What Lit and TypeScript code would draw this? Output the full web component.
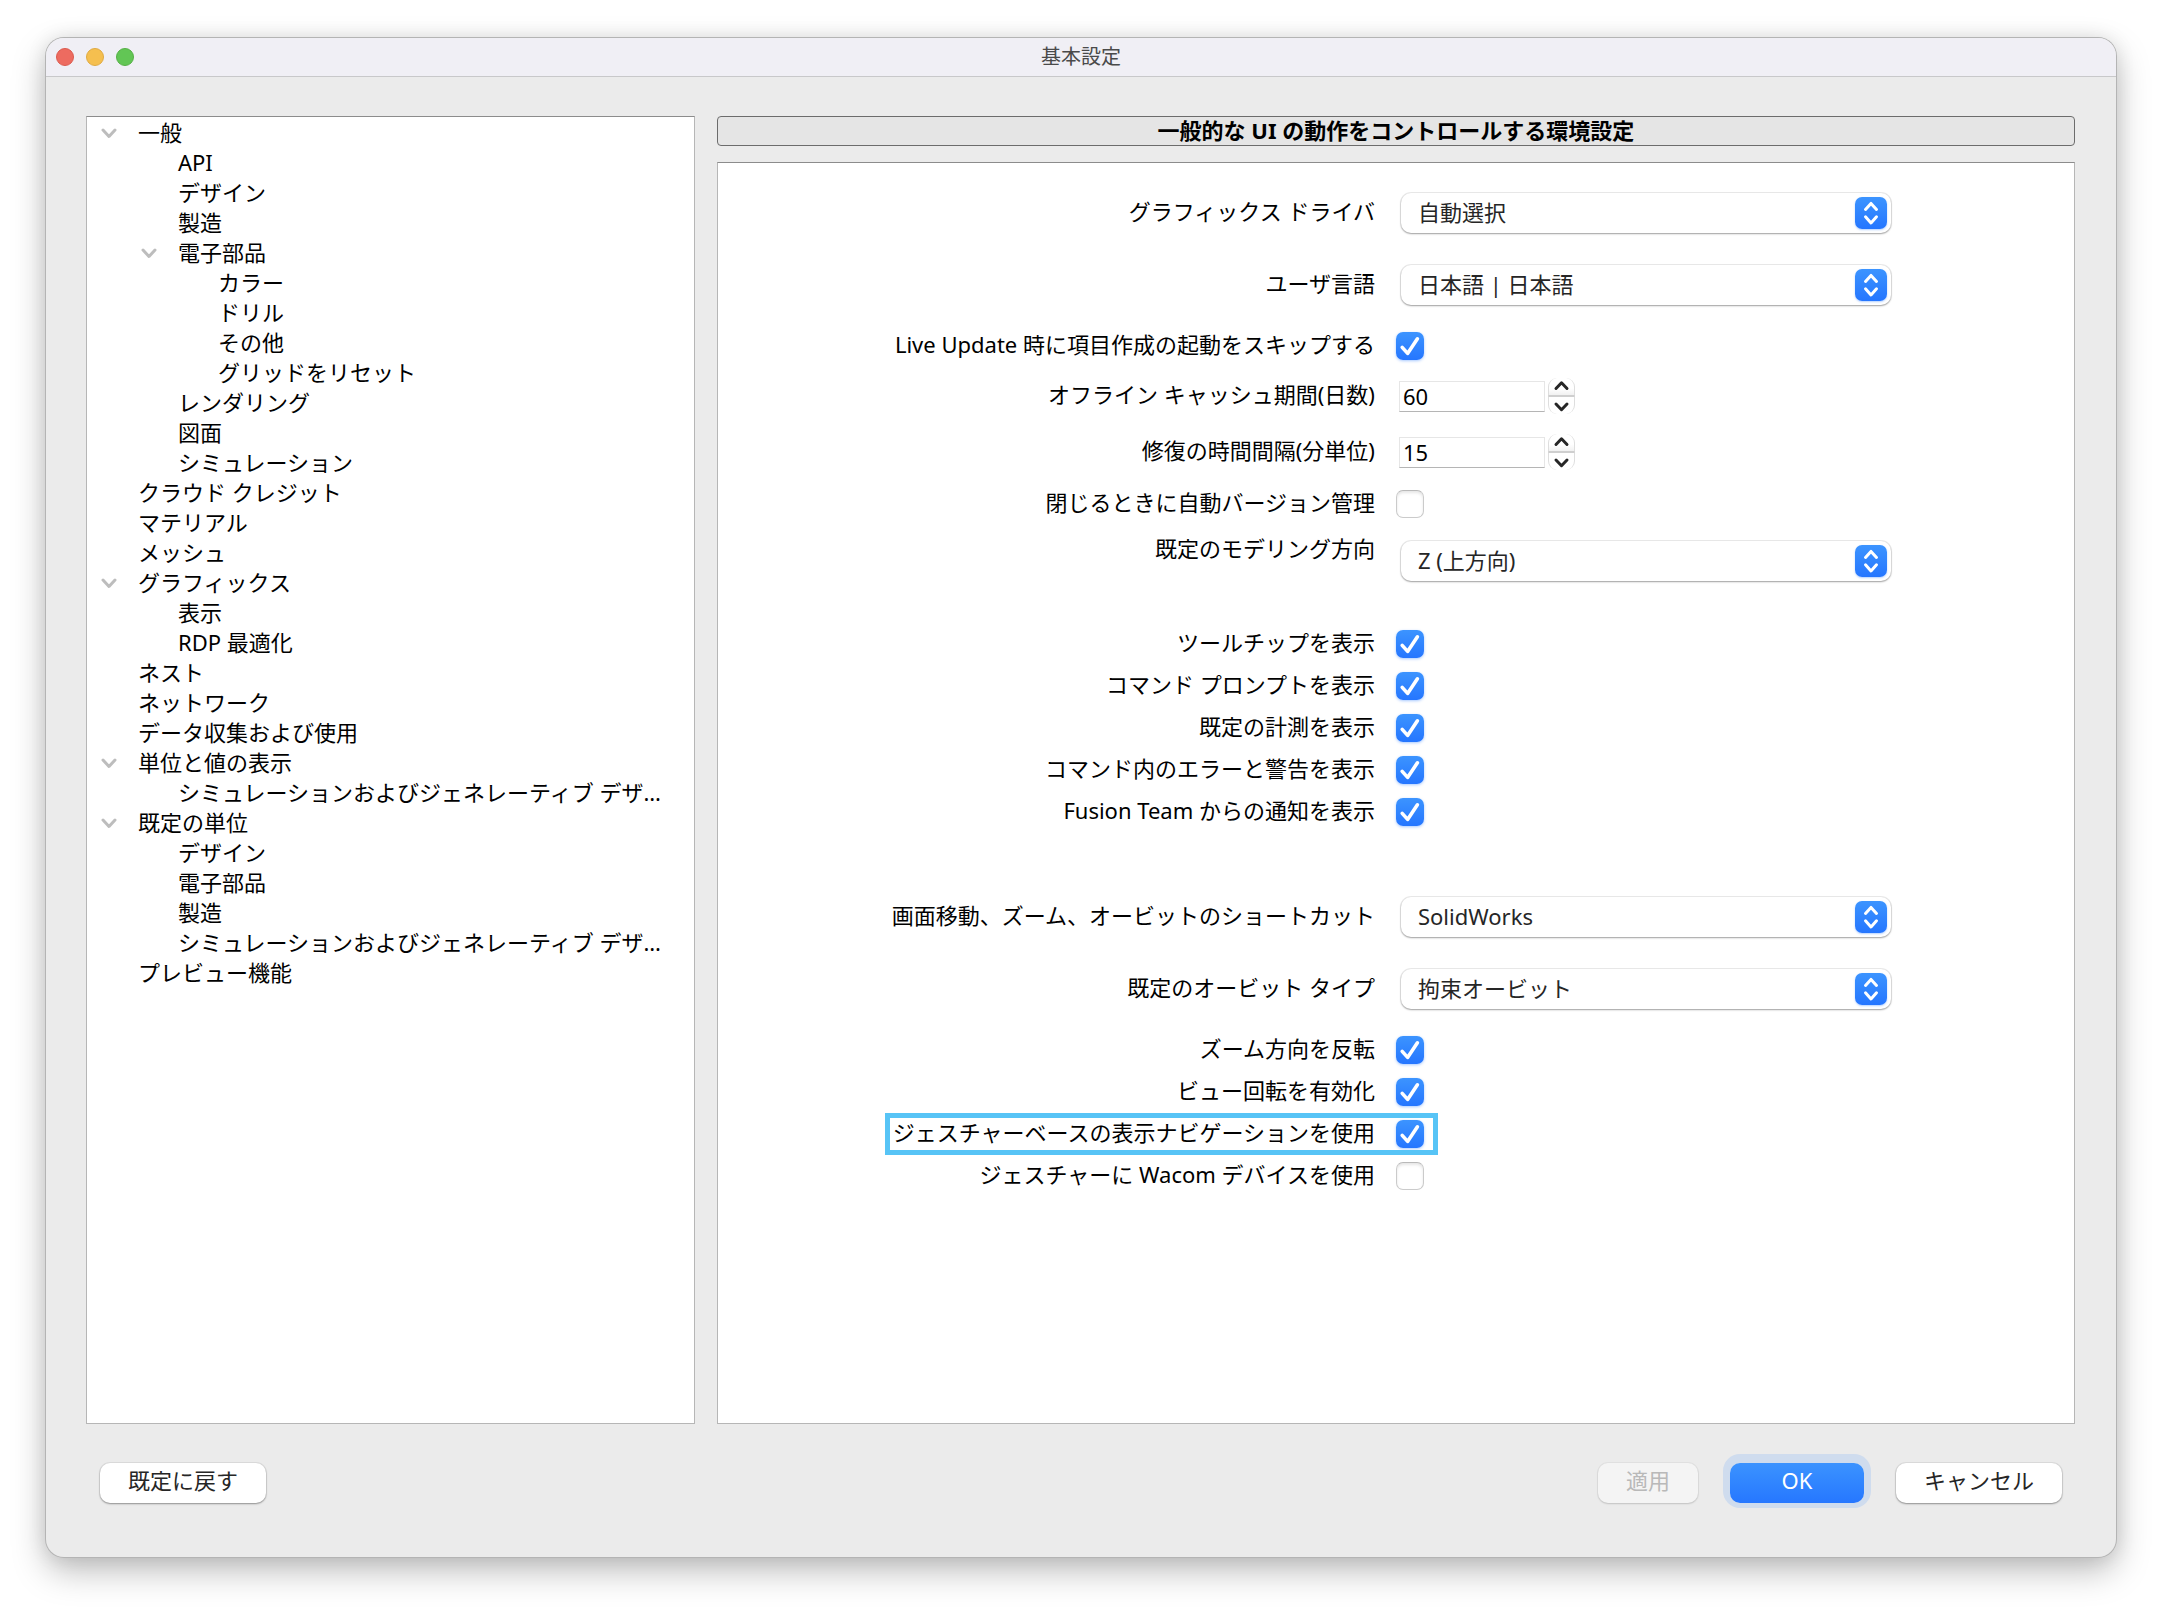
import { LitElement, html, css, svg, nothing } from "lit";
import { customElement, property, state } from "lit/decorators.js";
import { classMap } from "lit/directives/class-map.js";

interface TreeNode {
  label: string;
  children?: TreeNode[];
}

type Field =
  | { kind: "select"; id: string; label: string; value: string; gap: string; top?: boolean }
  | { kind: "check"; id: string; label: string; checked: boolean; gap: string; marked?: boolean }
  | { kind: "number"; id: string; label: string; value: number; gap: string };

const TREE: TreeNode[] = [
  {
    label: "一般",
    children: [
      { label: "API" },
      { label: "デザイン" },
      { label: "製造" },
      {
        label: "電子部品",
        children: [
          { label: "カラー" },
          { label: "ドリル" },
          { label: "その他" },
          { label: "グリッドをリセット" },
        ],
      },
      { label: "レンダリング" },
      { label: "図面" },
      { label: "シミュレーション" },
    ],
  },
  { label: "クラウド クレジット" },
  { label: "マテリアル" },
  { label: "メッシュ" },
  { label: "グラフィックス", children: [{ label: "表示" }, { label: "RDP 最適化" }] },
  { label: "ネスト" },
  { label: "ネットワーク" },
  { label: "データ収集および使用" },
  {
    label: "単位と値の表示",
    children: [{ label: "シミュレーションおよびジェネレーティブ デザ…" }],
  },
  {
    label: "既定の単位",
    children: [
      { label: "デザイン" },
      { label: "電子部品" },
      { label: "製造" },
      { label: "シミュレーションおよびジェネレーティブ デザ…" },
    ],
  },
  { label: "プレビュー機能" },
];

const FIELDS: Field[] = [
  { kind: "select", id: "driver", label: "グラフィックス ドライバ", value: "自動選択", gap: "none" },
  { kind: "select", id: "language", label: "ユーザ言語", value: "日本語 | 日本語", gap: "wide" },
  { kind: "check", id: "live", label: "Live Update 時に項目作成の起動をスキップする", checked: true, gap: "mid" },
  { kind: "number", id: "cache", label: "オフライン キャッシュ期間(日数)", value: 60, gap: "snug" },
  { kind: "number", id: "recovery", label: "修復の時間間隔(分単位)", value: 15, gap: "base" },
  { kind: "check", id: "version", label: "閉じるときに自動バージョン管理", checked: false, gap: "base" },
  { kind: "select", id: "orientation", label: "既定のモデリング方向", value: "Z (上方向)", gap: "loose", top: true },
  { kind: "check", id: "tooltips", label: "ツールチップを表示", checked: true, gap: "section" },
  { kind: "check", id: "prompt", label: "コマンド プロンプトを表示", checked: true, gap: "tight" },
  { kind: "check", id: "measure", label: "既定の計測を表示", checked: true, gap: "tight" },
  { kind: "check", id: "errors", label: "コマンド内のエラーと警告を表示", checked: true, gap: "tight" },
  { kind: "check", id: "team", label: "Fusion Team からの通知を表示", checked: true, gap: "tight" },
  { kind: "select", id: "shortcut", label: "画面移動、ズーム、オービットのショートカット", value: "SolidWorks", gap: "block" },
  { kind: "select", id: "orbit", label: "既定のオービット タイプ", value: "拘束オービット", gap: "wide" },
  { kind: "check", id: "zoom", label: "ズーム方向を反転", checked: true, gap: "mid" },
  { kind: "check", id: "rotate", label: "ビュー回転を有効化", checked: true, gap: "tight" },
  { kind: "check", id: "gesture", label: "ジェスチャーベースの表示ナビゲーションを使用", checked: true, gap: "tight", marked: true },
  { kind: "check", id: "wacom", label: "ジェスチャーに Wacom デバイスを使用", checked: false, gap: "tight" },
];

const chevron = (d: string) => svg`<path d=${d} fill="none" stroke="currentColor"
  stroke-width="3" stroke-linecap="round" stroke-linejoin="round"></path>`;

@customElement("settings-tree")
export class SettingsTree extends LitElement {
  @property({ attribute: false }) nodes: TreeNode[] = [];
  @state() private closed = new Set<TreeNode>();

  static styles = css`
    :host {
      display: block;
    }
    .branch {
      list-style: none;
      margin: 0;
      padding: 0;
    }
    .branch .branch {
      padding-left: 40px;
    }
    .row {
      display: flex;
      align-items: center;
      height: 30px;
      gap: 21px;
    }
    .toggle {
      flex: none;
      display: block;
      width: 16px;
      height: 16px;
      padding: 0;
      border: 0;
      background: none;
      color: #bdbdbd;
    }
    .toggle svg {
      display: block;
    }
    .toggle.closed svg {
      transform: rotate(-90deg);
    }
    .label {
      padding-bottom: 2px;
      white-space: nowrap;
    }
  `;

  private toggle(node: TreeNode) {
    const next = new Set(this.closed);
    if (!next.delete(node)) next.add(node);
    this.closed = next;
  }

  private branch(nodes: TreeNode[], root = false): unknown {
    return html`<ul class="branch" role=${root ? "tree" : "group"}>
      ${nodes.map((node) => {
        const closed = this.closed.has(node);
        return html`<li role="treeitem" aria-expanded=${node.children ? String(!closed) : nothing}>
          <div class="row">
            ${node.children
              ? html`<button
                  class=${classMap({ toggle: true, closed })}
                  type="button"
                  aria-label=${node.label}
                  @click=${() => this.toggle(node)}
                >
                  <svg width="16" height="16" viewBox="0 0 16 16">${chevron("M2 5 8 11.5 14 5")}</svg>
                </button>`
              : html`<span class="toggle"></span>`}
            <span class="label">${node.label}</span>
          </div>
          ${node.children && !closed ? this.branch(node.children) : nothing}
        </li>`;
      })}
    </ul>`;
  }

  render() {
    return this.branch(this.nodes, true);
  }
}

@customElement("settings-form")
export class SettingsForm extends LitElement {
  @property({ attribute: false }) fields: Field[] = [];

  static styles = css`
    :host {
      display: block;
    }
    .row {
      display: grid;
      grid-template-columns: 63fr 65fr;
      column-gap: 21px;
      align-items: center;
    }
    .gap-tight {
      margin-top: 14px;
    }
    .gap-snug {
      margin-top: 18px;
    }
    .gap-base {
      margin-top: 20px;
    }
    .gap-loose {
      margin-top: 22px;
    }
    .gap-mid {
      margin-top: 26px;
    }
    .gap-wide {
      margin-top: 30px;
    }
    .gap-section {
      margin-top: 48px;
    }
    .gap-block {
      margin-top: 70px;
    }
    .name {
      justify-self: end;
      line-height: 26px;
      padding-bottom: 4px;
      margin-block: -1px;
      white-space: nowrap;
    }
    .row.top {
      align-items: start;
    }
    .row.top .name {
      margin-top: -5px;
    }
    .marked {
      position: relative;
    }
    .marked::before {
      content: "";
      position: absolute;
      inset: -6px -63px -6px -8px;
      border: 5px solid #57c4f6;
      pointer-events: none;
    }
    .popup {
      display: grid;
      align-items: center;
      width: 73%;
      box-sizing: border-box;
      padding-left: 5px;
    }
    .popup select {
      grid-area: 1 / 1;
      appearance: none;
      width: 100%;
      height: 40px;
      margin: 1px 0;
      padding: 0 40px 2px 17px;
      border: 0;
      border-radius: 10px;
      background: #fff;
      box-shadow: 0 0 0 1px rgba(0, 0, 0, 0.08), 0 1px 2px rgba(0, 0, 0, 0.32);
      color: #262626;
      font: inherit;
    }
    .arrows {
      grid-area: 1 / 1;
      justify-self: end;
      width: 32px;
      height: 32px;
      margin-right: 4px;
      border-radius: 7px;
      background: linear-gradient(#3c94ff, #2576ff);
      box-shadow: 0 1px 2px rgba(38, 119, 255, 0.35);
      color: #fff;
      pointer-events: none;
    }
    .tick {
      display: grid;
      width: 28px;
      height: 28px;
    }
    .tick input {
      grid-area: 1 / 1;
      appearance: none;
      width: 28px;
      height: 28px;
      margin: 0;
      border: 1px solid #cbcbcb;
      border-top-color: #b9b9b9;
      border-radius: 7px;
      background: #fff;
      box-shadow: inset 0 2px 3px rgba(0, 0, 0, 0.1);
    }
    .tick input:checked {
      border: 0;
      background: linear-gradient(#3c94ff, #2576ff);
      box-shadow: 0 1px 3px rgba(38, 119, 255, 0.4);
    }
    .tick svg {
      grid-area: 1 / 1;
      z-index: 1;
      color: #fff;
      pointer-events: none;
      visibility: hidden;
    }
    .tick input:checked + svg {
      visibility: visible;
    }
    .spin {
      display: flex;
      align-items: center;
      gap: 3px;
      padding-left: 3px;
    }
    .spin input {
      appearance: textfield;
      box-sizing: border-box;
      width: 146px;
      height: 31px;
      margin: 0;
      padding: 0 3px;
      border: 1px solid #e6e6e6;
      border-bottom-color: #b5b5b5;
      background: #fff;
      color: #000;
      font: inherit;
      line-height: 28px;
    }
    .spin input::-webkit-inner-spin-button {
      appearance: none;
      margin: 0;
    }
    .stepper {
      display: flex;
      flex-direction: column;
      width: 27px;
      height: 36px;
    }
    .step {
      display: block;
      height: 18px;
      padding: 0;
      border: solid #dedede;
      border-width: 0 1px;
      background: #fff;
      color: #262626;
    }
    .step.up {
      border-bottom: 1px solid #cfcfcf;
      border-radius: 9px 9px 0 0;
      background: linear-gradient(#fff 60%, #f1f1f1);
    }
    .step.down {
      border-top: 1px solid #cfcfcf;
      border-radius: 0 0 9px 9px;
    }
    .step svg {
      display: block;
    }
  `;

  private step(field: Field, amount: number) {
    const input = this.renderRoot.querySelector<HTMLInputElement>(`#${field.id}`);
    if (input) input.valueAsNumber += amount;
  }

  private control(field: Field) {
    switch (field.kind) {
      case "select":
        return html`<div class="popup">
          <select id=${field.id}>
            <option>${field.value}</option>
          </select>
          <svg class="arrows" viewBox="0 0 32 32" aria-hidden="true">
            ${chevron("M10.5 12.5 16 6.4 21.5 12.5")}${chevron("M10.5 19.8 16 25.9 21.5 19.8")}
          </svg>
        </div>`;
      case "check":
        return html`<div class="tick">
          <input id=${field.id} type="checkbox" .checked=${field.checked} />
          <svg width="28" height="28" viewBox="0 0 28 28" aria-hidden="true">
            <path
              d="M6.2 15.4 11.6 21.4 21.4 6.8"
              fill="none"
              stroke="currentColor"
              stroke-width="3.6"
              stroke-linecap="round"
              stroke-linejoin="round"
            ></path>
          </svg>
        </div>`;
      case "number":
        return html`<div class="spin">
          <input id=${field.id} type="number" .value=${String(field.value)} />
          <div class="stepper">
            <button class="step up" type="button" aria-label="+" @click=${() => this.step(field, 1)}>
              <svg width="25" height="17" viewBox="0 0 25 17">${chevron("M7 10.5 12.5 4.8 18 10.5")}</svg>
            </button>
            <button class="step down" type="button" aria-label="-" @click=${() => this.step(field, -1)}>
              <svg width="25" height="17" viewBox="0 0 25 17">${chevron("M7 7 12.5 12.7 18 7")}</svg>
            </button>
          </div>
        </div>`;
    }
  }

  render() {
    return this.fields.map((field) => {
      const top = field.kind === "select" && !!field.top;
      const marked = field.kind === "check" && !!field.marked;
      return html`<div class=${classMap({ row: true, top, [`gap-${field.gap}`]: true })}>
        <label class=${classMap({ name: true, marked })} for=${field.id}>${field.label}</label>
        ${this.control(field)}
      </div>`;
    });
  }
}

@customElement("app-root")
export class AppRoot extends LitElement {
  static styles = css`
    :host {
      display: flex;
      box-sizing: border-box;
      min-height: 100vh;
      padding: 38px 46px 53px;
      background: #fff;
      color: #000;
      font: 22px/30px "Noto Sans", "Noto Sans CJK JP", sans-serif;
    }
    .window {
      flex: 1;
      min-width: 0;
      display: flex;
      flex-direction: column;
      border-radius: 18px;
      background: #ebebeb;
      box-shadow: 0 0 0 1px #b4b4b4, 0 14px 34px rgba(0, 0, 0, 0.26), 0 0 20px rgba(0, 0, 0, 0.1);
    }
    .titlebar {
      display: grid;
      grid-template-columns: 1fr auto 1fr;
      align-items: center;
      height: 38px;
      padding: 0 10px;
      border-bottom: 1px solid #c8c8ca;
      border-radius: 18px 18px 0 0;
      background: #f0eff5;
    }
    .lights {
      display: flex;
      gap: 12px;
    }
    .light {
      width: 18px;
      height: 18px;
      padding: 0;
      border: 1px solid;
      border-radius: 50%;
    }
    .close {
      border-color: #dc5a4e;
      background: #ed6b60;
    }
    .minimize {
      border-color: #e0aa41;
      background: #f5bf4f;
    }
    .maximize {
      border-color: #55b045;
      background: #62c655;
    }
    .title {
      margin: 0;
      color: #4a4a4a;
      font-size: 20px;
      font-weight: 400;
    }
    .body {
      flex: 1;
      display: grid;
      grid-template-columns: 13fr 29fr;
      gap: 22px;
      padding: 39px 41px 0 40px;
    }
    .pane {
      box-sizing: border-box;
      border: 1px solid #b6b6b6;
      border-top-color: #8c8c8c;
      background: #fff;
    }
    .tree {
      padding: 1px 14px;
    }
    .detail {
      display: flex;
      flex-direction: column;
      gap: 16px;
      min-width: 0;
    }
    .heading {
      box-sizing: border-box;
      height: 30px;
      margin: 0;
      border: 1px solid #6c6c6c;
      border-radius: 4px;
      background: #e5e5e5;
      font-size: 22px;
      font-weight: 700;
      line-height: 26px;
      text-align: center;
    }
    .form {
      flex: 1;
      padding: 29px 0 0;
    }
    .footer {
      display: flex;
      align-items: center;
      padding: 39px 54px 54px;
    }
    .actions {
      display: flex;
      gap: 32px;
      margin-left: auto;
    }
    .button {
      height: 40px;
      min-width: 100px;
      padding: 0 28px 6px;
      border: 0;
      border-radius: 10px;
      background: #fff;
      box-shadow: 0 0 0 1px rgba(0, 0, 0, 0.06), 0 1px 2px rgba(0, 0, 0, 0.35);
      color: #262626;
      font: inherit;
    }
    .button:disabled {
      background: #f4f4f4;
      box-shadow: 0 0 0 1px rgba(0, 0, 0, 0.04), 0 1px 2px rgba(0, 0, 0, 0.14);
      color: #b9b9b9;
    }
    .primary {
      min-width: 134px;
      background: linear-gradient(#3b93ff, #2677ff);
      box-shadow: 0 -2px 0 7px #cfdcee;
      color: #fff;
    }
  `;

  render() {
    return html`
      <main class="window">
        <header class="titlebar">
          <div class="lights">
            <button class="light close" type="button" aria-label="閉じる"></button>
            <button class="light minimize" type="button" aria-label="しまう"></button>
            <button class="light maximize" type="button" aria-label="拡大"></button>
          </div>
          <h1 class="title">基本設定</h1>
        </header>
        <div class="body">
          <nav class="pane tree"><settings-tree .nodes=${TREE}></settings-tree></nav>
          <section class="detail">
            <h2 class="heading">一般的な UI の動作をコントロールする環境設定</h2>
            <div class="pane form"><settings-form .fields=${FIELDS}></settings-form></div>
          </section>
        </div>
        <footer class="footer">
          <button class="button" type="button">既定に戻す</button>
          <div class="actions">
            <button class="button" type="button" disabled>適用</button>
            <button class="button primary" type="button">OK</button>
            <button class="button" type="button">キャンセル</button>
          </div>
        </footer>
      </main>
    `;
  }
}
